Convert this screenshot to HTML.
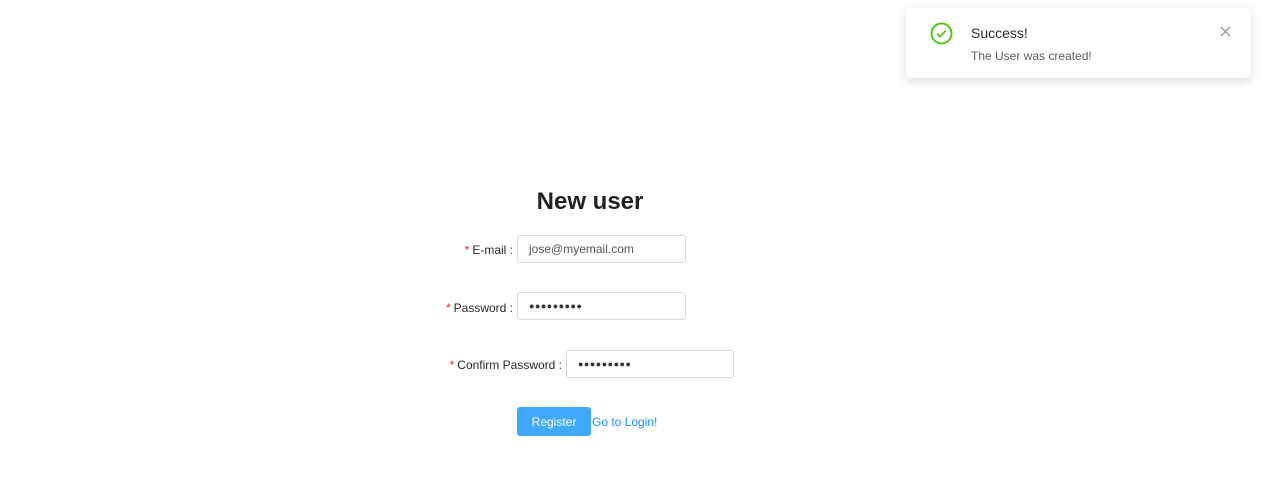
<!DOCTYPE html>
<html><head><style>
body{margin:0;width:1270px;height:481px;background:#fff;font-family:"Liberation Sans",sans-serif;position:relative;overflow:hidden;color:rgba(0,0,0,.85)}
.a{position:absolute}
.toast{left:906px;top:8px;width:345px;height:70px;background:#fff;border-radius:4px;box-shadow:0 3px 10px rgba(0,0,0,.15)}
.inp{position:absolute;height:28px;border:1px solid #d9d9d9;border-radius:3px;box-sizing:border-box;font-size:12px;color:#555;padding-left:11px;line-height:26px}
.pw{font-size:9px;letter-spacing:0.5px;color:#333}
.lbl{position:absolute;font-size:12px;text-align:right;line-height:16px}
.lbl b{color:#f5222d;font-weight:normal;margin-right:3px}
</style></head><body>
<div class="a toast">
<svg class="a" style="left:24px;top:14px" width="23" height="23" viewBox="0 0 23 23"><circle cx="11.5" cy="11.5" r="10" fill="none" stroke="#52c41a" stroke-width="2"/><path d="M7 11.5l3 3 6-6" fill="none" stroke="#52c41a" stroke-width="1.8"/></svg>
<div class="a" style="left:65px;top:17px;font-size:14px;color:rgba(0,0,0,.85)">Success!</div>
<div class="a" style="left:65px;top:41px;font-size:12px;color:rgba(0,0,0,.65)">The User was created!</div>
<svg class="a" style="left:314px;top:18px" width="11" height="11" viewBox="0 0 11 11"><path d="M1 1l9 9M10 1l-9 9" stroke="#888" stroke-width="1.2"/></svg>
</div>
<div class="a" style="left:490px;width:200px;top:188px;text-align:center;font-size:24px;font-weight:bold;color:#222">New user</div>
<div class="lbl" style="right:757px;top:242px"><b>*</b>E-mail :</div>
<div class="inp" style="left:517px;top:235px;width:169px">jose@myemail.com</div>
<div class="lbl" style="right:757px;top:300px"><b>*</b>Password :</div>
<div class="inp pw" style="left:517px;top:292px;width:169px">●●●●●●●●●</div>
<div class="lbl" style="right:708px;top:357px"><b>*</b>Confirm Password :</div>
<div class="inp pw" style="left:566px;top:350px;width:168px">●●●●●●●●●</div>
<div class="a" style="left:517px;top:407px;width:74px;height:29px;background:#40a9ff;border-radius:3px;color:#fff;font-size:12px;text-align:center;line-height:30px">Register</div>
<div class="a" style="left:592px;top:415px;font-size:12px;color:#1890ff">Go to Login!</div>
</body></html>
